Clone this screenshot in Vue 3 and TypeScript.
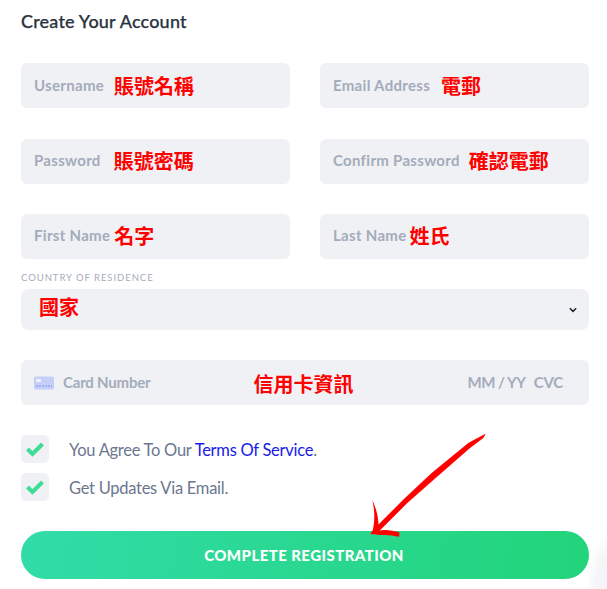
<script setup lang="ts">
interface Field {
  label: string
  note: string
  gap: number
}

const rows: Field[][] = [
  [
    { label: 'Username', note: '賬號名稱', gap: 10 },
    { label: 'Email Address', note: '電郵', gap: 11 },
  ],
  [
    { label: 'Password', note: '賬號密碼', gap: 13 },
    { label: 'Confirm Password', note: '確認電郵', gap: 9 },
  ],
  [
    { label: 'First Name', note: '名字', gap: 4 },
    { label: 'Last Name', note: '姓氏', gap: 3 },
  ],
]
</script>

<template>
  <main class="page">
    <h1 class="title">Create Your Account</h1>

    <div class="rows">
      <div v-for="(row, i) in rows" :key="i" class="row">
        <div v-for="field in row" :key="field.label" class="field">
          <span class="placeholder spaced">{{ field.label }}</span>
          <span class="note" :style="{ marginLeft: field.gap + 'px' }">{{ field.note }}</span>
        </div>
      </div>
    </div>

    <label class="caption">COUNTRY OF RESIDENCE</label>
    <div class="select">
      <span class="note select-note">國家</span>
      <svg class="chevron" width="8" height="6" viewBox="0 0 8 6" aria-hidden="true">
        <path d="M0.8 1.2 4 4.4 7.2 1.2" fill="none" stroke="#1f2430" stroke-width="1.5" />
      </svg>
    </div>

    <div class="card">
      <svg class="card-icon" width="20" height="14" viewBox="0 0 20 14" aria-hidden="true">
        <rect width="20" height="13" y="0.5" rx="1.5" fill="#c5cffa" />
        <rect x="2" y="3" width="5" height="3" fill="#eef1fe" />
        <path d="M2 10h16" stroke="#7f8ff0" stroke-width="1" stroke-dasharray="2 1" />
      </svg>
      <span class="placeholder card-number">Card Number</span>
      <span class="note card-note">信用卡資訊</span>
      <span class="placeholder card-date">MM / YY</span>
      <span class="placeholder card-cvc">CVC</span>
    </div>

    <div class="check-row first">
      <span class="box">
        <svg width="20" height="16" viewBox="0 0 20 16" aria-hidden="true">
          <path d="M2.5 8 7.5 13 17.5 3" fill="none" stroke="#3fdc97" stroke-width="4" />
        </svg>
      </span>
      <span class="check-text">You Agree To Our <a class="link">Terms Of Service</a>.</span>
    </div>
    <div class="check-row">
      <span class="box">
        <svg width="20" height="16" viewBox="0 0 20 16" aria-hidden="true">
          <path d="M2.5 8 7.5 13 17.5 3" fill="none" stroke="#3fdc97" stroke-width="4" />
        </svg>
      </span>
      <span class="check-text">Get Updates Via Email.</span>
    </div>

    <button class="submit" type="button">COMPLETE REGISTRATION</button>

    <svg class="arrow" width="130" height="110" viewBox="0 0 130 110" aria-hidden="true">
      <path d="M129 6.3 112.3 15.3 75.7 45.3 49 70.3 19 100.3 15 105 22.3 103.7 50.7 75.3 79 50.3 114 19.7 127.3 9.7Z" fill="#ff0000" stroke="#ff0000" stroke-width="0.6" stroke-linejoin="round" />
      <path d="M16.3 72C20 80 23 90 22.5 100L16 106C19 94 19 84 16.3 72Z" fill="#ff0000" />
      <path d="M14.7 105.3C19 103 24 102 29 102 34 102 39 103 43.3 104.3L43.3 108.7C38 108 34 107 29 107 24 107 19 107 14.7 106.3Z" fill="#ff0000" />
    </svg>
  </main>
</template>

<style scoped>
.page {
  position: relative;
  box-sizing: border-box;
  width: 607px;
  height: 589px;
  padding: 10px 18px 0 21px;
  overflow: hidden;
  background: radial-gradient(ellipse 20px 56px at 100% 100%, #f3f3f7 0%, #f6f6f9 60%, #fff 100%), #fff;
  font-family: Lato, "Noto Sans CJK TC", sans-serif;
}

.title {
  margin: 0 0 30px;
  height: 23px;
  color: #2a3240;
  font-size: 18px;
  line-height: 23px;
  font-weight: 500;
  letter-spacing: 0.2px;
  -webkit-text-stroke: 0.25px #2a3240;
}

.rows {
  display: flex;
  flex-direction: column;
  gap: 30.5px;
  margin-bottom: 13px;
}

.row {
  display: grid;
  grid-template-columns: 269px 269px;
  column-gap: 30px;
}

.row:last-child .placeholder {
  top: -2px;
}

.row:last-child .note {
  position: relative;
  top: -1px;
}

.field,
.select,
.card {
  display: flex;
  align-items: center;
  background: #f0f1f4;
  border-radius: 6px;
}

.field {
  height: 45px;
  padding: 0 13px;
}

.placeholder {
  position: relative;
  top: -1px;
  color: #a3acbc;
  font-size: 15px;
  font-weight: 700;
  white-space: nowrap;
}

.spaced {
  letter-spacing: 0.3px;
}

.note {
  color: #ff0000;
  font-family: "Noto Sans CJK TC", sans-serif;
  font-size: 20px;
  font-weight: 700;
  line-height: 24px;
  white-space: nowrap;
}

.select-note {
  position: relative;
  top: -3px;
}

.caption {
  display: block;
  height: 12px;
  margin-bottom: 5px;
  color: #a3acbc;
  font-size: 9.5px;
  line-height: 12px;
  letter-spacing: 0.95px;
}

.select {
  justify-content: space-between;
  height: 41px;
  margin-bottom: 30px;
  padding: 0 12px 0 18px;
  border-radius: 8px;
}

.chevron {
  display: block;
}

.card {
  height: 45px;
  padding: 0 26px 0 13px;
}

.card-icon {
  flex: none;
}

.card-number {
  margin-left: 9px;
  letter-spacing: -0.2px;
}

.card-note {
  position: relative;
  top: 1px;
  margin-left: 103px;
}

.card-date {
  margin-left: 114px;
  letter-spacing: -0.5px;
}

.card-cvc {
  margin-left: auto;
  letter-spacing: -0.2px;
}

.check-row {
  display: flex;
  align-items: center;
  gap: 20px;
  height: 28px;
  margin-bottom: 10px;
}

.check-row.first {
  margin-top: 30px;
}

.box {
  display: flex;
  align-items: center;
  justify-content: center;
  flex: none;
  width: 28px;
  height: 28px;
  background: #f0f1f4;
  border-radius: 5px;
}

.check-text {
  position: relative;
  top: 1px;
  color: #6c778e;
  font-size: 16.5px;
  letter-spacing: -0.27px;
}

.link {
  color: #1a1ae6;
}

.submit {
  display: block;
  width: 568px;
  height: 48px;
  margin-top: 30px;
  padding: 0 2px 0 0;
  border: 0;
  border-radius: 24px;
  background: linear-gradient(95deg, #31dca8, #22d47a);
  color: #fff;
  font-family: Lato, sans-serif;
  font-size: 15px;
  font-weight: 900;
  letter-spacing: 0.43px;
}

.arrow {
  position: absolute;
  left: 356px;
  top: 428px;
  overflow: visible;
  pointer-events: none;
}
</style>
